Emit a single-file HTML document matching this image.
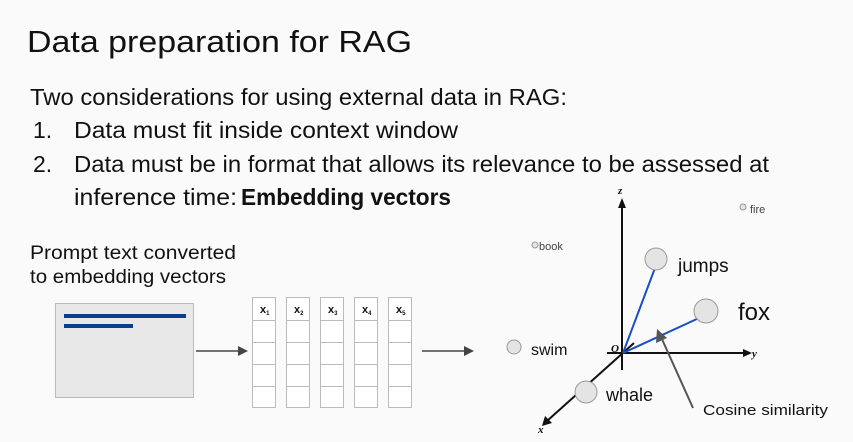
<!DOCTYPE html>
<html><head><meta charset="utf-8"><style>html,body{margin:0;padding:0;background:#fafafa;}svg{display:block}</style></head>
<body>
<svg width="853" height="442" viewBox="0 0 853 442" xmlns="http://www.w3.org/2000/svg" font-family="Liberation Sans, sans-serif" fill="#111">
<rect width="853" height="442" fill="#fafafa"/>
<text x="27" y="52" font-size="31" textLength="385" lengthAdjust="spacingAndGlyphs">Data preparation for RAG</text>
<text x="30" y="105" font-size="23" textLength="537" lengthAdjust="spacingAndGlyphs">Two considerations for using external data in RAG:</text>
<text x="33" y="138" font-size="23">1.</text>
<text x="74" y="138" font-size="23" textLength="384" lengthAdjust="spacingAndGlyphs">Data must fit inside context window</text>
<text x="33" y="172" font-size="23">2.</text>
<text x="74" y="172" font-size="23" textLength="695" lengthAdjust="spacingAndGlyphs">Data must be in format that allows its relevance to be assessed at</text>
<text x="74" y="205" font-size="23" textLength="163" lengthAdjust="spacingAndGlyphs">inference time:</text>
<text x="241" y="205" font-size="23" font-weight="bold" textLength="210" lengthAdjust="spacingAndGlyphs">Embedding vectors</text>
<text x="30" y="259" font-size="19" textLength="206" lengthAdjust="spacingAndGlyphs">Prompt text converted</text>
<text x="30" y="283" font-size="19" textLength="196" lengthAdjust="spacingAndGlyphs">to embedding vectors</text>
<rect x="55.5" y="303.5" width="138" height="94" fill="#e8e8e8" stroke="#bbb"/>
<rect x="64" y="314" width="122" height="4" fill="#0a3d8a"/>
<rect x="64" y="324" width="69" height="4" fill="#0a3d8a"/>
<g stroke="#444" stroke-width="1.5"><line x1="196" y1="351" x2="240" y2="351"/><line x1="422" y1="351" x2="466" y2="351"/></g>
<polygon points="248,351 238,346 238,356" fill="#444"/><polygon points="474,351 464,346 464,356" fill="#444"/>
<g fill="#fff" stroke="#bbb">
<rect x="252.5" y="297.5" width="23" height="110"/><rect x="286.5" y="297.5" width="23" height="110"/><rect x="320.5" y="297.5" width="23" height="110"/><rect x="354.5" y="297.5" width="23" height="110"/><rect x="388.5" y="297.5" width="23" height="110"/>
</g>
<g stroke="#bbb"><line x1="252" y1="320.5" x2="412" y2="320.5"/><line x1="252" y1="342.5" x2="412" y2="342.5"/><line x1="252" y1="364.5" x2="412" y2="364.5"/><line x1="252" y1="386.5" x2="412" y2="386.5"/></g>
<g stroke="#fafafa" stroke-width="10"><line x1="281" y1="290" x2="281" y2="410"/><line x1="315" y1="290" x2="315" y2="410"/><line x1="349" y1="290" x2="349" y2="410"/><line x1="383" y1="290" x2="383" y2="410"/></g>
<g font-size="11" font-weight="bold"><text x="260" y="313">x<tspan font-size="6" dy="2">1</tspan></text><text x="294" y="313">x<tspan font-size="6" dy="2">2</tspan></text><text x="328" y="313">x<tspan font-size="6" dy="2">3</tspan></text><text x="362" y="313">x<tspan font-size="6" dy="2">4</tspan></text><text x="396" y="313">x<tspan font-size="6" dy="2">5</tspan></text></g>
<g stroke="#111" stroke-width="2"><line x1="622" y1="205" x2="622" y2="370"/><line x1="607" y1="353" x2="745" y2="353"/><line x1="634" y1="343" x2="547" y2="421"/></g>
<polygon points="622,198 618,208 626,208" fill="#111"/><polygon points="752,353 743,349 743,357" fill="#111"/><polygon points="542,426 545,416 552,423" fill="#111"/>
<g font-family="Liberation Serif, serif" font-style="italic" font-weight="bold" font-size="11"><text x="618" y="194">z</text><text x="752" y="357">y</text><text x="538" y="433">x</text><text x="611" y="352">O</text></g>
<g stroke="#1a4fc4" stroke-width="2"><line x1="623" y1="353" x2="655" y2="268"/><line x1="623" y1="353" x2="699" y2="318"/></g>
<g fill="#e4e4e4" stroke="#999"><circle cx="656" cy="259" r="11"/><circle cx="706" cy="311" r="12"/><circle cx="514" cy="347" r="7"/><circle cx="586" cy="392" r="11"/><circle cx="535" cy="245" r="3"/><circle cx="743" cy="207" r="3"/></g>
<line x1="693" y1="408" x2="661" y2="337" stroke="#555" stroke-width="2"/><polygon points="657,329 656,343 667,338" fill="#555"/>
<text x="678" y="272" font-size="19">jumps</text>
<text x="738" y="320" font-size="24">fox</text>
<text x="531" y="355" font-size="16">swim</text>
<text x="606" y="401" font-size="18">whale</text>
<text x="703" y="415" font-size="15" textLength="125" lengthAdjust="spacingAndGlyphs">Cosine similarity</text>
<text x="539" y="250" font-size="11" fill="#444">book</text>
<text x="750" y="213" font-size="11" fill="#444">fire</text>
</svg>
</body></html>
